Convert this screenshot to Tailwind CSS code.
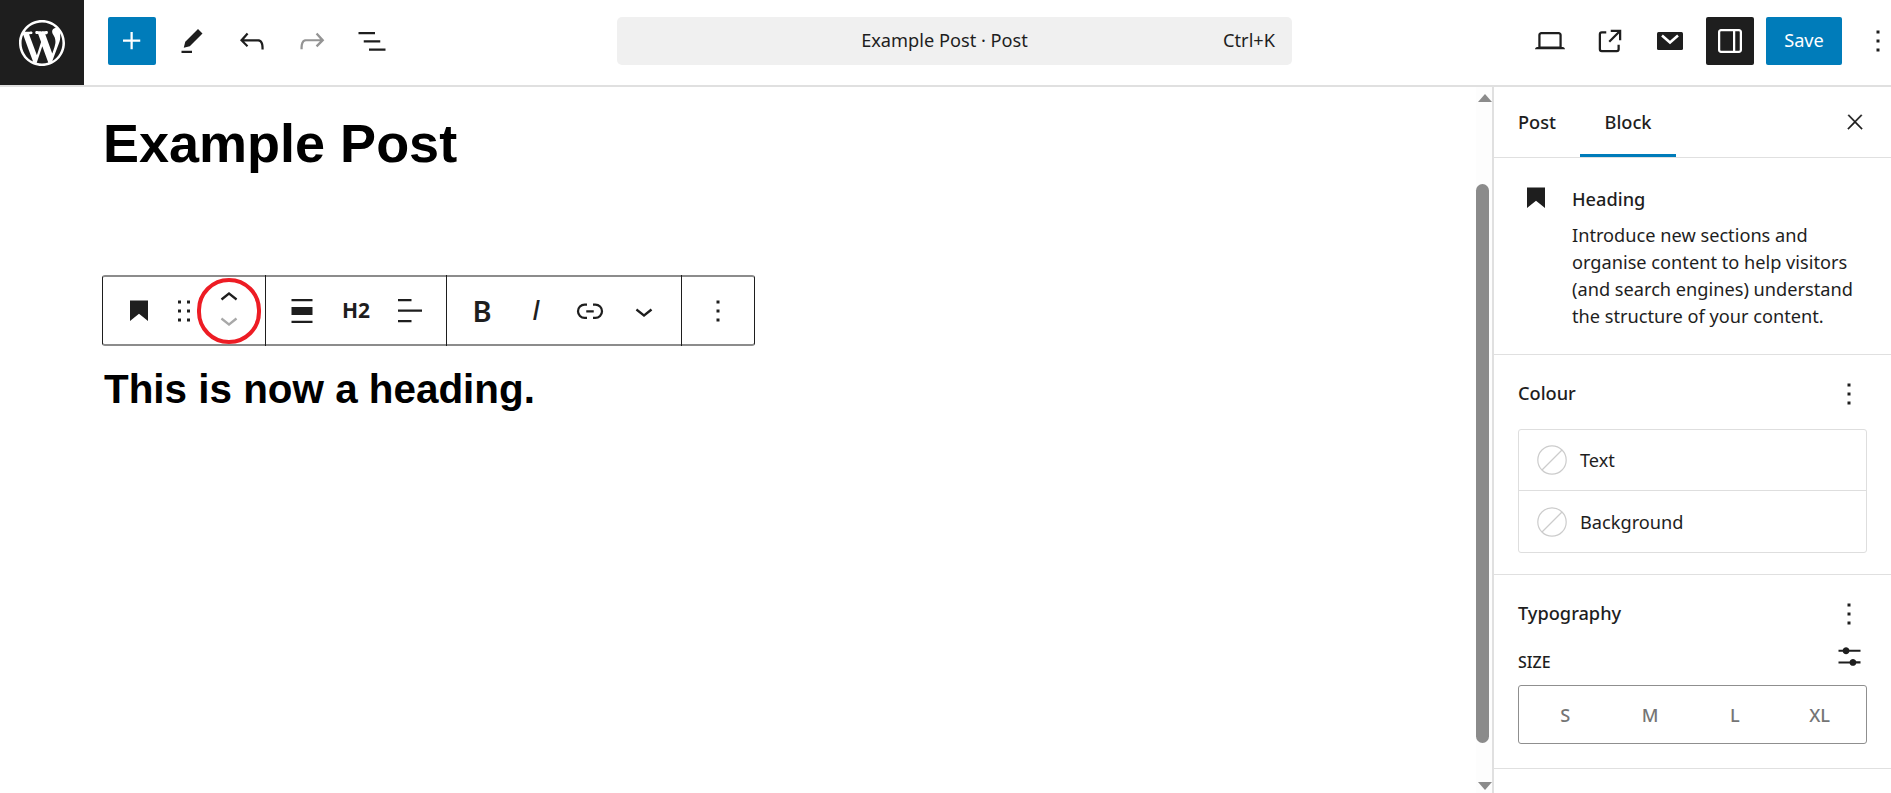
<!DOCTYPE html>
<html lang="en">
<head>
<meta charset="utf-8">
<title>Example Post</title>
<script src="https://cdn.jsdelivr.net/npm/@tailwindcss/browser@4"></script>
</head>
<body class="bg-white overflow-hidden">
<div class="w-[1891px] h-[793px] flex flex-col font-['Noto_Sans',sans-serif] text-[#1e1e1e] text-[18.2px]">
  <!-- top bar -->
  <header class="h-[87px] flex items-center pb-[3px] border-b-2 border-[#e0e0e0] shrink-0 relative">
    <div class="w-[84px] h-[85px] mb-[-3px] bg-[#1e1e1e] flex items-center justify-center shrink-0">
      <svg class="w-[46px] h-[46px]" viewBox="0 0 20 20" fill="#fff"><path d="M20 10c0-5.51-4.49-10-10-10C4.48 0 0 4.49 0 10c0 5.52 4.48 10 10 10 5.51 0 10-4.48 10-10zM7.78 15.37L4.37 6.22c.55-.02 1.17-.08 1.17-.08.5-.06.44-1.13-.06-1.11 0 0-1.45.11-2.37.11-.18 0-.37 0-.58-.01C4.12 2.69 6.87 1.11 10 1.11c2.33 0 4.45.87 6.05 2.34-.68-.11-1.65.39-1.65 1.58 0 .74.45 1.36.9 2.1.35.61.55 1.36.55 2.46 0 1.49-1.4 5-1.4 5l-3.03-8.37c.54-.02.82-.17.82-.17.5-.05.44-1.25-.06-1.22 0 0-1.44.12-2.38.12-.87 0-2.33-.12-2.33-.12-.5-.03-.56 1.2-.06 1.22l.92.08 1.26 3.41zM17.41 10c.24-.64.74-1.87.43-4.25.7 1.29 1.05 2.71 1.05 4.25 0 3.29-1.73 6.24-4.4 7.78.97-2.59 1.94-5.2 2.92-7.78zM6.1 18.09C3.12 16.65 1.11 13.53 1.11 10c0-1.3.23-2.48.72-3.59C3.25 10.3 4.67 14.2 6.1 18.09zm4.03-6.63l2.58 6.98c-.86.29-1.76.45-2.71.45-.79 0-1.57-.11-2.29-.33.81-2.38 1.62-4.74 2.42-7.1z"/></svg>
    </div>
    <div class="ml-6 flex items-center gap-3 shrink-0">
      <button class="w-12 h-12 rounded-[2px] bg-[#007cba] flex items-center justify-center">
        <svg class="w-9 h-9" viewBox="0 0 24 24" fill="#fff"><path d="M11 12.5V17.5H12.5V12.5H17.5V11H12.5V6H11V11H6V12.5H11Z"/></svg>
      </button>
      <button class="w-12 h-12 flex items-center justify-center">
        <svg class="w-9 h-9" viewBox="0 0 24 24" fill="#1e1e1e"><path d="m19 7-3-3-8.5 8.5-1 4 4-1L19 7Zm-7 11.5H5V20h7v-1.5Z"/></svg>
      </button>
      <button class="w-12 h-12 flex items-center justify-center">
        <svg class="w-9 h-9" viewBox="0 0 24 24" fill="#1e1e1e"><path d="M18.3 11.7c-.6-.6-1.4-.9-2.3-.9H6.7l2.9-3.3-1.1-1-4.5 5L8.5 16l1-1-2.7-2.7H16c.5 0 .9.2 1.3.5 1 1 1 3.4 1 4.5v.3h1.5v-.2c0-1.5 0-4.3-1.5-5.7z"/></svg>
      </button>
      <button class="w-12 h-12 flex items-center justify-center">
        <svg class="w-9 h-9" viewBox="0 0 24 24" fill="#949494"><path d="M15.6 6.5l-1.1 1 2.9 3.3H8c-.9 0-1.7.3-2.3.9-1.4 1.5-1.4 4.2-1.4 5.6v.2h1.5v-.3c0-1.1 0-3.5 1-4.5.3-.3.7-.5 1.3-.5h9.2L14.5 15l1.1 1.1 4.6-4.6-4.6-5z"/></svg>
      </button>
      <button class="w-12 h-12 flex items-center justify-center">
        <svg class="w-9 h-9" viewBox="0 0 24 24" fill="#1e1e1e"><path d="M3 6h11v1.5H3V6Zm3.5 5.5h11V13h-11v-1.5ZM21 17H10v1.5h11V17Z"/></svg>
      </button>
    </div>
    <div class="ml-[221px] w-[675px] h-12 shrink-0 rounded-[5px] bg-[#f0f0f0] relative flex items-center justify-center">
      <span class="mr-[20px]">Example Post · Post</span>
      <span class="absolute right-[17px] top-1/2 -translate-y-1/2">Ctrl+K</span>
    </div>
    <div class="ml-[228px] flex items-center shrink-0">
      <button class="w-[60px] h-12 flex items-center justify-center">
        <svg class="w-9 h-9" viewBox="0 0 24 24" fill="#1e1e1e"><path d="M20.5 16h-.7V8c0-1.1-.9-2-2-2H6.2c-1.1 0-2 .9-2 2v8h-.7c-.8 0-1.5.7-1.5 1.5h20c0-.8-.7-1.5-1.5-1.5zM5.7 8c0-.3.2-.5.5-.5h11.6c.3 0 .5.2.5.5v7.6H5.7V8z"/></svg>
      </button>
      <button class="w-[60px] h-12 flex items-center justify-center">
        <svg class="w-9 h-9" viewBox="0 0 24 24" fill="#1e1e1e"><path d="M19.5 4.5h-7V6h4.44l-5.97 5.97 1.06 1.06L18 7.06v4.44h1.5v-7Zm-13 1a2 2 0 0 0-2 2v10a2 2 0 0 0 2 2h10a2 2 0 0 0 2-2v-3H17v3a.5.5 0 0 1-.5.5h-10a.5.5 0 0 1-.5-.5v-10a.5.5 0 0 1 .5-.5h3V5.5h-3Z"/></svg>
      </button>
      <button class="w-[60px] h-12 flex items-center justify-center">
        <svg class="w-[26px] h-[18px]" viewBox="0 0 26 18"><rect width="26" height="18" rx="1.5" fill="#1e1e1e"/><path d="M5 3.5l8 7 8-7" fill="none" stroke="#fff" stroke-width="2.6"/></svg>
      </button>
      <button class="ml-[6px] w-12 h-12 rounded-[2px] bg-[#1e1e1e] flex items-center justify-center">
        <svg class="w-9 h-9" viewBox="0 0 24 24" fill="#fff"><path fill-rule="evenodd" d="M18 4H6c-1.1 0-2 .9-2 2v12c0 1.1.9 2 2 2h12c1.1 0 2-.9 2-2V6c0-1.1-.9-2-2-2zm-4 14.5H6c-.3 0-.5-.2-.5-.5V6c0-.3.2-.5.5-.5h8v13zm4.5-.5c0 .3-.2.5-.5.5h-2.5v-13H18c.3 0 .5.2.5.5v12z"/></svg>
      </button>
      <button class="ml-3 w-[76px] h-12 rounded-[2px] bg-[#007cba] text-white">Save</button>
      <button class="ml-[24px] w-[24px] h-12 flex items-center justify-center">
        <svg class="w-9 h-9 shrink-0" viewBox="0 0 24 24" fill="#1e1e1e"><path d="M13 19h-2v-2h2v2zm0-6h-2v-2h2v2zm0-6h-2V5h2v2z"/></svg>
      </button>
    </div>
  </header>

  <div class="flex flex-1 min-h-0">
    <!-- canvas -->
    <main class="w-[1476px] shrink-0 pl-[103px] pt-[24px] relative font-['Liberation_Sans',sans-serif]">
      <h1 class="text-[54px] leading-[64px] font-bold text-black">Example Post</h1>
      <div class="mt-[100px] -ml-[1px] w-[653px] h-[71px] flex rounded-[3px] border-y-2 border-y-[#8c8c8c] border-x border-x-[#1e1e1e] font-['Noto_Sans',sans-serif]">
        <div class="w-[163px] -my-[2px] border-r border-[#1e1e1e] flex items-center pl-[9px]">
          <span class="w-[54px] flex justify-center">
            <svg class="w-9 h-9" viewBox="0 0 24 24" fill="#1e1e1e"><path d="M6 5V18.5911L12 13.8473L18 18.5911V5H6Z"/></svg>
          </span>
          <span class="w-[36px] flex justify-center">
            <svg class="w-9 h-9" viewBox="0 0 24 24" fill="#1e1e1e"><path d="M8 7h2V5H8v2zm0 6h2v-2H8v2zm0 6h2v-2H8v2zm6-14v2h2V5h-2zm0 8h2v-2h-2v2zm0 6h2v-2h-2v2z"/></svg>
          </span>
          <span class="relative w-[54px] h-full flex flex-col items-center justify-center pb-[3px]">
            <svg class="w-9 h-9 shrink-0 -mb-[14.6px]" viewBox="0 0 24 24" fill="#1e1e1e"><path d="M6.5 12.4L12 8l5.5 4.4-.9 1.2L12 10l-4.5 3.6-1-1.2z"/></svg>
            <svg class="w-9 h-9 shrink-0" viewBox="0 0 24 24" fill="#a8a8a8"><path d="M17.5 11.6L12 16l-5.5-4.4.9-1.2L12 14l4.5-3.6 1 1.2z"/></svg>
            <span class="absolute left-[-5px] top-[3px] w-[64px] h-[66px] rounded-full border-[4px] border-[#ed1c24]"></span>
          </span>
        </div>
        <div class="w-[181px] -my-[2px] border-r border-[#1e1e1e] flex items-center pl-[9px]">
          <span class="w-[54px] flex justify-center">
            <svg class="w-9 h-9" viewBox="0 0 24 24" fill="#1e1e1e"><path d="M5 4h14v1.5H5V4ZM5 9.3h14v5.4H5V9.3Zm0 9.2h14V20H5v-1.5Z"/></svg>
          </span>
          <span class="w-[54px] text-center text-[21px] font-bold leading-none">H2</span>
          <span class="w-[54px] flex justify-center">
            <svg class="w-9 h-9" viewBox="0 0 24 24" fill="#1e1e1e"><path d="M13 5.5H4V4h9v1.5Zm7 7H4V11h16v1.5Zm-7 7H4V18h9v1.5Z"/></svg>
          </span>
        </div>
        <div class="w-[235px] -my-[2px] border-r border-[#1e1e1e] flex items-center pl-[8px]">
          <span class="w-[54px] text-center text-[29px] font-semibold leading-none">B</span>
          <span class="w-[54px] text-center text-[29px] italic leading-none font-['Liberation_Sans',sans-serif]">I</span>
          <span class="w-[54px] flex justify-center">
            <svg class="w-9 h-9" viewBox="0 0 24 24" fill="#1e1e1e"><path d="M10 17.389H8.444A5.194 5.194 0 1 1 8.444 7H10v1.5H8.444a3.694 3.694 0 0 0 0 7.389H10v1.5ZM14 7h1.556a5.194 5.194 0 0 1 0 10.39H14v-1.5h1.556a3.694 3.694 0 0 0 0-7.39H14V7Zm-4.5 6h5v-1.5h-5V13Z"/></svg>
          </span>
          <span class="w-[54px] flex justify-center">
            <svg class="w-9 h-9" viewBox="0 0 24 24" fill="#1e1e1e"><path d="M17.5 11.6L12 16l-5.5-4.4.9-1.2L12 14l4.5-3.6 1 1.2z"/></svg>
          </span>
        </div>
        <div class="flex-1 flex items-center justify-center">
          <svg class="w-9 h-9" viewBox="0 0 24 24" fill="#1e1e1e"><path d="M13 19h-2v-2h2v2zm0-6h-2v-2h2v2zm0-6h-2V5h2v2z"/></svg>
        </div>
      </div>
      <h2 class="mt-[19px] ml-[1px] text-[40.4px] leading-[48px] font-bold text-black">This is now a heading.</h2>
    </main>

    <!-- scrollbar -->
    <div class="w-[16px] shrink-0 bg-[#fdfdfd] flex flex-col items-center">
      <div class="mt-[7px] w-0 h-0 border-x-[7.5px] border-x-transparent border-b-[8px] border-b-[#8b8b8b] ml-[1px]"></div>
      <div class="mt-[82px] w-[13px] h-[559px] bg-[#8b8b8b] rounded-[7px] -ml-[3px]"></div>
      <div class="mt-[39px] w-0 h-0 border-x-[7.5px] border-x-transparent border-t-[8px] border-t-[#8b8b8b] ml-[1px]"></div>
    </div>

    <!-- sidebar -->
    <aside class="flex-1 min-w-0 border-l-2 border-[#e0e0e0]">
      <div class="h-[71px] border-b border-[#e0e0e0] flex items-center relative">
        <div class="w-[86px] h-full flex items-center justify-center font-medium pt-[2px]">Post</div>
        <div class="w-[96px] h-full flex items-center justify-center font-medium border-b-[3px] border-[#007cba] pt-[5px]">Block</div>
        <svg class="absolute right-[24px] top-[23px] w-[24px] h-[24px]" viewBox="0 0 24 24" fill="#1e1e1e" stroke="#1e1e1e" stroke-width="0.3"><path d="M13 11.8l6.1-6.3-1-1-6.1 6.2-6.1-6.2-1 1 6.1 6.3-6.5 6.7 1 1 6.5-6.6 6.5 6.6 1-1z"/></svg>
      </div>

      <section class="h-[197px] border-b border-[#e0e0e0] pl-[24px] pt-[28px] flex">
        <span class="w-9 mr-[18px] -mt-[6px] flex justify-center shrink-0 h-9">
          <svg class="w-9 h-9" viewBox="0 0 24 24" fill="#1e1e1e"><path d="M6 5V18.5911L12 13.8473L18 18.5911V5H6Z"/></svg>
        </span>
        <div>
          <div class="font-medium leading-[27px]">Heading</div>
          <p class="mt-[9px] leading-[27px]">Introduce new sections and<br>organise content to help visitors<br>(and search engines) understand<br>the structure of your content.</p>
        </div>
      </section>

      <section class="h-[220px] border-b border-[#e0e0e0] pl-[24px] pr-[24px] pt-[25px]">
        <div class="flex items-center justify-between h-[27px]">
          <span class="font-medium">Colour</span>
          <svg class="w-9 h-9 shrink-0" viewBox="0 0 24 24" fill="#1e1e1e"><path d="M13 19h-2v-2h2v2zm0-6h-2v-2h2v2zm0-6h-2V5h2v2z"/></svg>
        </div>
        <div class="mt-[22px] border border-[#dedede] rounded-[3px] divide-y divide-[#dedede]">
          <div class="h-[61px] flex items-center pl-[18px] gap-[13px]">
            <svg class="w-[30px] h-[30px]" viewBox="0 0 30 30" fill="none" stroke="#cccccc" stroke-width="1.2"><circle cx="15" cy="15" r="14.2"/><path d="M5 25 25 5"/></svg>
            <span class="pt-[2px]">Text</span>
          </div>
          <div class="h-[61px] flex items-center pl-[18px] gap-[13px]">
            <svg class="w-[30px] h-[30px]" viewBox="0 0 30 30" fill="none" stroke="#cccccc" stroke-width="1.2"><circle cx="15" cy="15" r="14.2"/><path d="M5 25 25 5"/></svg>
            <span class="pt-[2px]">Background</span>
          </div>
        </div>
      </section>

      <section class="h-[194px] border-b border-[#e0e0e0] pl-[24px] pr-[24px] pt-[25px]">
        <div class="flex items-center justify-between h-[27px]">
          <span class="font-medium">Typography</span>
          <svg class="w-9 h-9 shrink-0" viewBox="0 0 24 24" fill="#1e1e1e"><path d="M13 19h-2v-2h2v2zm0-6h-2v-2h2v2zm0-6h-2V5h2v2z"/></svg>
        </div>
        <div class="mt-[21px] flex items-center justify-between h-[27px]">
          <span class="text-[16px] font-medium">SIZE</span>
          <svg class="w-[33px] h-[33px] shrink-0 mr-[1.5px] -mt-[10px]" viewBox="0 0 24 24" fill="#1e1e1e"><path d="M14.5 13.8c-1.1 0-2.1.7-2.4 1.8H4V17h8.1c.3 1 1.3 1.8 2.4 1.8s2.1-.7 2.4-1.8H20v-1.5h-3.1c-.3-1-1.3-1.7-2.4-1.7zM11.9 7c-.3-1-1.3-1.8-2.4-1.8S7.4 6 7.1 7H4v1.5h3.1c.3 1 1.3 1.8 2.4 1.8s2.1-.7 2.4-1.8H20V7h-8.1z"/></svg>
        </div>
        <div class="mt-[10px] h-[59px] border border-[#8f8f8f] rounded-[3px] grid grid-cols-4 items-center px-[4px] pt-[2px] text-center text-[#757575] font-medium">
          <span>S</span><span>M</span><span>L</span><span>XL</span>
        </div>
      </section>
    </aside>
  </div>
</div>
</body>
</html>
